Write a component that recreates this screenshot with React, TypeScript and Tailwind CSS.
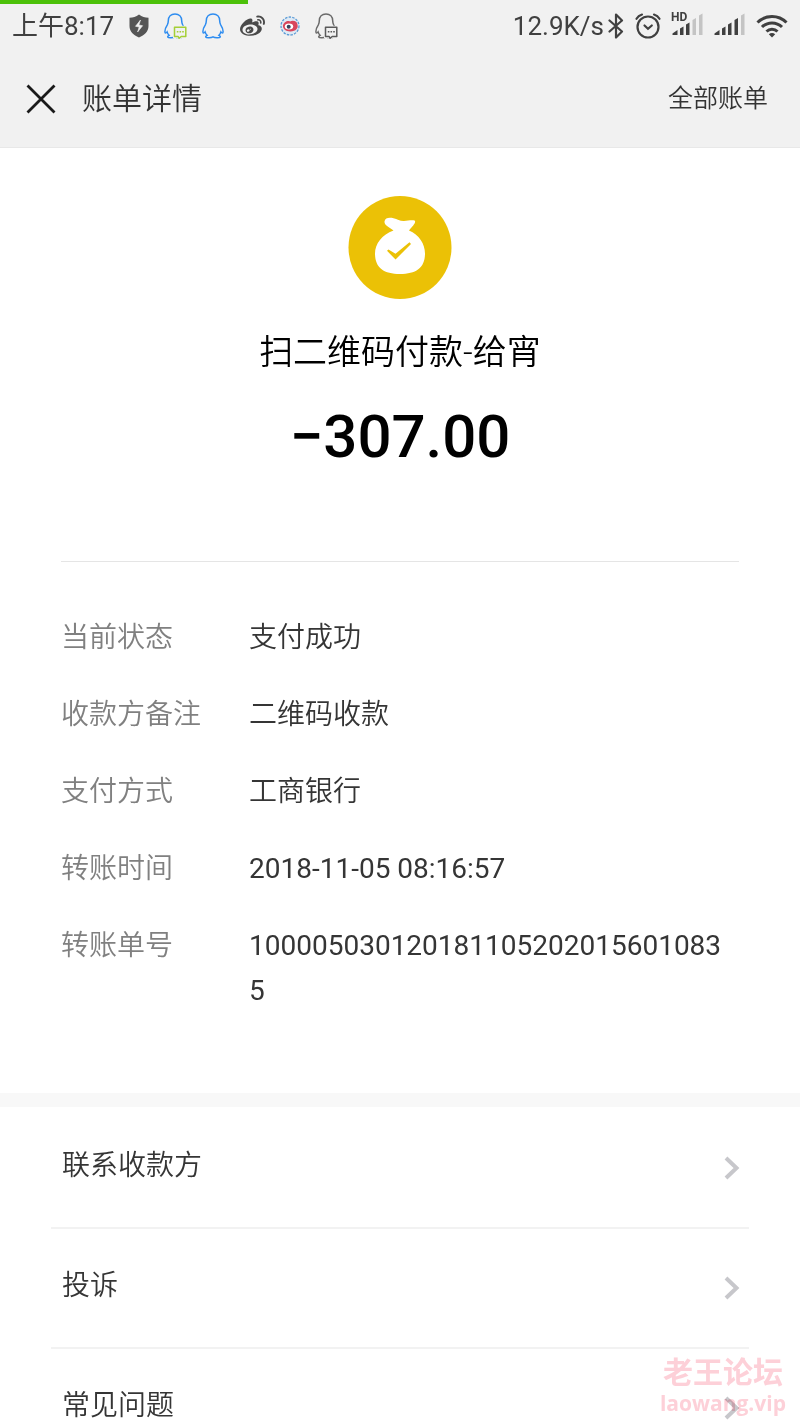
import { FaWeibo } from 'react-icons/fa';

const details = [
  { label: '当前状态', value: '支付成功' },
  { label: '收款方备注', value: '二维码收款' },
  { label: '支付方式', value: '工商银行' },
  { label: '转账时间', value: '2018-11-05 08:16:57', numeric: true },
  { label: '转账单号', value: '1000050301201811052020156010835', numeric: true },
];

const links = ['联系收款方', '投诉', '常见问题'];

function ShieldIcon() {
  return (
    <svg width="20" height="24" viewBox="0 0 20 24" aria-hidden="true">
      <path d="M10 0.5C7 2.8 4 3.6 0.5 3.8V12c0 5.5 4 9.3 9.500 11.500 5.500-2.200 9.500-6 9.500-11.500V3.800C16 3.600 13 2.800 10 .5Z" fill="#555" />
      <path d="M11.500 6 6.500 12.300l3.700.7L8.600 18l5-6.300-3.700-.7Z" fill="#f1f1f1" stroke="#f1f1f1" strokeWidth=".6" />
    </svg>
  );
}

function PenguinIcon({ color, bubble }: { color: string; bubble?: string }) {
  return (
    <svg width="23" height="26" viewBox="0 0 23 26" fill="none" aria-hidden="true">
      <path
        d="M11 1C7 1 4.300 3.700 4.300 7.800c0 1.700-.2 2.600-1 4C2 13.800.9 16 .9 18.500c0 2 .9 2 2.200.4.400 1.500 1 2.500 2 3.400-1 .5-1.700 1.200-1.300 1.800.5.900 5.400.9 7.200-.3 1.800 1.200 6.700 1.200 7.200.3.400-.6-.3-1.300-1.300-1.800 1-.9 1.600-1.900 2-3.400 1.300 1.600 2.200 1.600 2.200-.4 0-2.500-1.100-4.700-2.400-6.700-.8-1.400-1-2.300-1-4C17.700 3.700 15 1 11 1Z"
        stroke={color}
        strokeWidth="1.500"
      />
      {bubble && (
        <>
          <path d="M10.500 14.200h11.300v9.300h-4.600L15 25.300l-.8-1.800h-3.700Z" fill="#f1f1f1" stroke="#f1f1f1" strokeWidth="3" />
          <path d="M10.500 14.200h11.300v9.300h-4.600L15 25.300l-.8-1.800h-3.700Z" stroke={bubble} strokeWidth="1.500" strokeLinejoin="round" />
          <path d="M12.800 18.700h1.600M15.500 18.700h1.600M18.200 18.700h1.600" stroke={bubble} strokeWidth="1.600" />
        </>
      )}
    </svg>
  );
}

function WeiboBadge() {
  return (
    <svg width="20" height="20" viewBox="0 0 20 20" aria-hidden="true">
      <circle cx="10" cy="10" r="9" fill="#dfeaf5" stroke="#5b9bd5" strokeWidth="1.300" strokeDasharray="2.500 1.200" />
      <path d="M3 9.500C3.500 6 8 4 10 5.500c3-1.800 7.500-.2 7.500 3.200 1 3.500-1.500 6.500-7 6.700C6 15.500 2.500 13 3 9.500Z" fill="#d9475c" />
      <ellipse cx="9" cy="10.500" rx="4.200" ry="3" fill="#fff" />
      <circle cx="8.700" cy="10.700" r="2" fill="#39435c" />
    </svg>
  );
}

function BluetoothIcon() {
  return (
    <svg width="16" height="26" viewBox="0 0 16 26" fill="none" aria-hidden="true">
      <path d="m1.500 7.500 12.500 11-6 6v-23l6 6-12.500 11" stroke="#404040" strokeWidth="2.200" strokeLinejoin="round" strokeLinecap="round" />
    </svg>
  );
}

function AlarmIcon() {
  return (
    <svg width="26" height="26" viewBox="0 0 26 26" fill="none" stroke="#404040" strokeWidth="2.200" strokeLinecap="round" aria-hidden="true">
      <circle cx="13" cy="14" r="10.500" />
      <path d="m9.500 12.500 3.500 3.300 3.800-3.300" />
      <path d="M1.500 5.800C2.800 3.500 4.500 2.200 7 1.500M24.500 5.800C23.200 3.500 21.500 2.200 19 1.500" />
    </svg>
  );
}

function SignalIcon({ filled, hd }: { filled: number; hd?: boolean }) {
  const bars = [
    'M.5 22v-1.500L5.500 17v5Z',
    'M8 15.500l3.500-2V22H8Z',
    'M14 11.500l3.500-2V22H14Z',
    'M20.500 7l3.500-2v17h-3.500Z',
    'M27 2.500 30.500.5V22H27Z',
  ];
  return (
    <svg width="31" height="26" viewBox="0 0 31 26" className="overflow-visible" aria-hidden="true">
      {bars.map((d, i) => (
        <path key={d} d={d} fill={i < filled ? '#404040' : '#c4c4c4'} />
      ))}
      {hd && (
        <>
          <path d="M-1-2h18V9H-1Z" fill="#f1f1f1" />
          <text x="-1" y="8" fontSize="12" fontWeight="700" fontFamily="Roboto, sans-serif" fill="#404040">HD</text>
        </>
      )}
    </svg>
  );
}

function WifiIcon() {
  return (
    <svg width="32" height="24" viewBox="0 0 32 24" fill="none" stroke="#404040" strokeWidth="3" aria-hidden="true">
      <path d="M1.500 8.500a20.500 20.500 0 0 1 29 0" />
      <path d="M6 13a14.200 14.200 0 0 1 20 0" />
      <path d="M10.500 17.500a7.800 7.800 0 0 1 11 0" />
      <path d="M12.800 20.300c1.800-1.800 4.600-1.800 6.400 0L16 23.500Z" fill="#404040" stroke="none" />
    </svg>
  );
}

function MoneyBagIcon() {
  return (
    <svg width="104" height="104" viewBox="0 0 104 104" aria-hidden="true">
      <circle cx="52" cy="51.500" r="51.500" fill="#ebc106" />
      <path
        d="M45.500 34.500C42 31.500 36 29.500 36.500 25.500c.5-4 5-4.200 9-3.300 4 .9 6.500 3 10.500 2.800 4-.2 8-1.500 11-.3.800 2.800-2.500 5.300-6 9.800C71 38.500 77 48 77 57.500 77 72 68 78 52 78S27 72 27 57.500C27 48 34 38.500 45.500 34.500Z"
        fill="#fff"
      />
      <path d="M39 54.800 40.500 53.400 47.500 57.800 61.500 46.300 63 48 47.500 63.500Z" fill="#ebc106" />
    </svg>
  );
}

function StatusBar() {
  return (
    <div className="flex h-11 items-center justify-between px-3 text-[26px] text-[#404040]">
      <div className="flex items-center gap-[15px]">
        <span className="whitespace-nowrap">上午8:17</span>
        <ShieldIcon />
        <PenguinIcon color="#2d8cf0" bubble="#a4cf36" />
        <PenguinIcon color="#2d8cf0" />
        <FaWeibo className="size-[25px] text-[#4a4a4a]" />
        <WeiboBadge />
        <PenguinIcon color="#6a6a6a" bubble="#5a5a5a" />
      </div>
      <div className="flex items-center gap-[11px]">
        <div className="flex items-center gap-1">
          <span className="whitespace-nowrap">12.9K/s</span>
          <BluetoothIcon />
        </div>
        <AlarmIcon />
        <SignalIcon filled={3} hd />
        <SignalIcon filled={4} />
        <WifiIcon />
      </div>
    </div>
  );
}

function Watermark() {
  return (
    <div className="pointer-events-none absolute right-[14px] bottom-[7px] text-center font-bold text-[#fdd0d8] mix-blend-multiply">
      <div className="text-[30px] leading-9">老王论坛</div>
      <div className="font-['Open_Sans',sans-serif] text-[21px] leading-6">laowang.vip</div>
    </div>
  );
}

export default function App() {
  return (
    <div className="relative flex h-screen flex-col overflow-hidden bg-white font-['Roboto','Noto_Sans_CJK_SC',sans-serif]" lang="zh-CN">
      <header className="shrink-0 border-b border-[#e8e8e8] bg-[#f1f1f1]">
        <div className="h-1 w-[31%] bg-[#4cc10a]" />
        <StatusBar />
        <div className="flex h-[99px] items-center justify-between pt-0.5 pr-8 pl-[26px]">
          <div className="flex items-center gap-[26px]">
            <button type="button" aria-label="关闭">
              <svg width="30" height="30" viewBox="0 0 30 30" aria-hidden="true">
                <path d="m1.500 1.500 27 27M28.500 1.500l-27 27" stroke="#1a1a1a" strokeWidth="2.800" />
              </svg>
            </button>
            <h1 className="text-[30px] font-[350] text-[#333]">账单详情</h1>
          </div>
          <a href="#bills" className="text-[25px] font-[350] text-[#333]">全部账单</a>
        </div>
      </header>

      <main className="min-h-0 flex-1 overflow-hidden">
        <section className="px-[61px] pt-12 pb-20">
          <div className="flex flex-col items-center text-black">
            <MoneyBagIcon />
            <h2 className="mt-[27px] text-[34px] leading-[50px] font-[350]">扫二维码付款-给宵</h2>
            <p className="mt-6 text-[60px] leading-[72px] font-medium">−307.00</p>
          </div>

          <dl className="mt-[88px] grid grid-cols-[188px_1fr] gap-y-8 border-t border-[#e5e5e5] pt-[53px] text-[28px] leading-[45px]">
            {details.map((item) => (
              <div key={item.label} className="contents">
                <dt className="font-[350] text-[#808080]">{item.label}</dt>
                <dd className={`pr-2 break-all text-[#353535] ${item.numeric ? 'font-normal' : 'font-[350]'}`}>
                  {item.value}
                </dd>
              </div>
            ))}
          </dl>
        </section>

        <nav className="border-t-14 border-[#f8f8f8] px-[51px] pt-0.5">
          {links.map((label) => (
            <a
              key={label}
              href="#"
              className="flex h-[120px] items-center justify-between border-b-2 border-[#f2f2f2] pr-[9px] pl-[11px] text-[28px] font-[350] text-[#353535]"
            >
              <span className="pb-1">{label}</span>
              <svg width="16" height="24" viewBox="0 0 16 24" fill="none" aria-hidden="true">
                <path d="m2 2 10.500 10L2 22" stroke="#c7c7cb" strokeWidth="4" />
              </svg>
            </a>
          ))}
        </nav>
      </main>

      <Watermark />
    </div>
  );
}
